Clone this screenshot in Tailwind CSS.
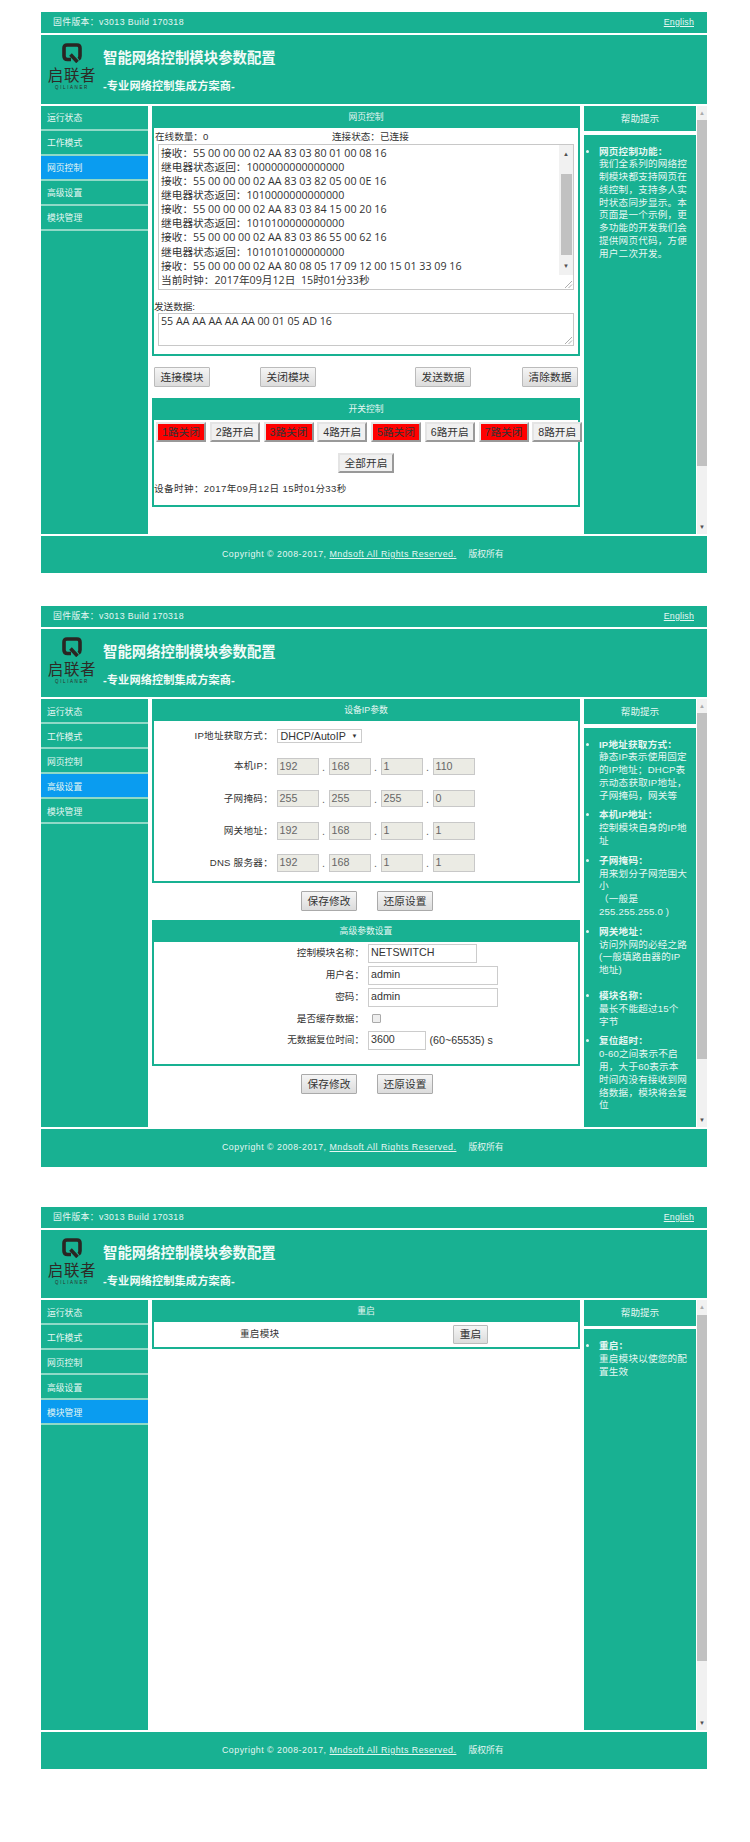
<!DOCTYPE html>
<html lang="zh-CN">
<head>
    <meta charset="UTF-8">
    <title>智能网络控制模块参数配置</title>
    <script src="https://cdn.jsdelivr.net/npm/@tailwindcss/browser@4"></script>
</head>
<body class="bg-white font-['Liberation_Sans','Noto_Sans_CJK_TC',sans-serif] text-[9.6px] text-[#333]">
<div class="w-[750px] h-[1842px] overflow-hidden pl-[41px] pt-[12px]">

    <!-- page 1 : web control -->
    <div class="w-[666px]">
        <div class="h-[21px] bg-[#18b192] text-[#e6f7f2] text-[8.8px] flex items-center justify-between pl-[12px] pr-[13px]">
            <span class="tracking-[0.4px]">固件版本：v3013 Build 170318</span><a class="underline tracking-[0.2px]">English</a>
        </div>
        <div class="mt-[2px] h-[69px] bg-[#18b192] flex">
            <div class="w-[48px] ml-[7px] flex flex-col items-center pt-[8px] text-[#2e2a26]">
                <svg class="w-[20px] h-[20px]" viewBox="0 0 20 20"><path d="M9 16.5H5.5Q2 16.5 2 13V5Q2 2 5 2H15Q18 2 18 5V13Q18 15 16.5 16M8.5 11.5L15.5 19" fill="none" stroke="#2a2522" stroke-width="3.6"/></svg>
                <div class="mt-[4px] text-[15.5px] leading-[17px] tracking-[0.6px] whitespace-nowrap">启联者</div>
                <div class="mt-[1px] text-[4.5px] leading-[6px] tracking-[1.6px] whitespace-nowrap">QILIANER</div>
            </div>
            <div class="ml-[7px] text-[#f2fbf8] font-bold">
                <div class="mt-[13px] text-[14.4px] leading-[20px]">智能网络控制模块参数配置</div>
                <div class="mt-[10px] text-[11.2px] leading-[16px] tracking-[0.1px]">-专业网络控制集成方案商-</div>
            </div>
        </div>
        <div class="mt-[2px] h-[428px] flex">
            <div class="w-[107px] bg-[#18b192] text-[8.8px] text-[#e6f7f2]">
                <div class="h-[25px] pl-[6px] pt-[3px] flex items-center border-b-2 border-[#8fd9c7]">运行状态</div>
                <div class="h-[25px] pl-[6px] pt-[3px] flex items-center border-b-2 border-[#8fd9c7]">工作模式</div>
                <div class="h-[25px] pl-[6px] pt-[3px] flex items-center border-b-2 border-[#8fd9c7] bg-[#0a9cf0]">网页控制</div>
                <div class="h-[25px] pl-[6px] pt-[3px] flex items-center border-b-2 border-[#8fd9c7]">高级设置</div>
                <div class="h-[25px] pl-[6px] pt-[3px] flex items-center border-b-2 border-[#8fd9c7]">模块管理</div>
            </div>
            <div class="w-[428px] ml-[4px]">
                <div class="h-[22px] pt-[2px] bg-[#18b192] text-[8.8px] text-[#e6f7f2] flex items-center justify-center">网页控制</div>
                <div class="h-[228px] border-x-2 border-b-2 border-[#18b192]">
                    <div class="h-[16px] flex items-end text-[9.6px]">
                        <span class="ml-[1px] w-[177px] leading-[14px]">在线数量：0</span><span class="leading-[14px]">连接状态：已连接</span>
                    </div>
                    <div class="relative ml-[4px] w-[416px] h-[146px] border border-[#c8c8c8] flex overflow-hidden">
                        <div class="flex-1 pl-[2px] font-['Open_Sans','Noto_Sans_CJK_TC',sans-serif] text-[10.7px] leading-[14.07px] whitespace-pre -mt-[13px]">当前时钟：2017年09月12日  15时01分32秒
接收：55 00 00 00 02 AA 83 03 80 01 00 08 16
继电器状态返回：1000000000000000
接收：55 00 00 00 02 AA 83 03 82 05 00 0E 16
继电器状态返回：1010000000000000
接收：55 00 00 00 02 AA 83 03 84 15 00 20 16
继电器状态返回：1010100000000000
接收：55 00 00 00 02 AA 83 03 86 55 00 62 16
继电器状态返回：1010101000000000
接收：55 00 00 00 02 AA 80 08 05 17 09 12 00 15 01 33 09 16
当前时钟：2017年09月12日  15时01分33秒</div>
                        <div class="w-[14px] bg-[#f1f1f1] flex flex-col items-center">
                            <div class="h-[14px] mt-[2px] text-[6px] leading-[14px] text-[#505050]">▲</div>
                            <div class="mt-[13px] w-[11px] h-[81px] bg-[#c1c1c1]"></div>
                            <div class="mt-[4px] h-[14px] text-[6px] leading-[14px] text-[#505050]">▼</div>
                        </div>
                        <div class="absolute right-0 bottom-0 w-[14px] h-[14px] bg-white">
                            <svg class="w-[14px] h-[14px]" viewBox="0 0 14 14"><path d="M6 13L13 6M9.5 13L13 9.5" stroke="#999" stroke-width="0.8"/></svg>
                        </div>
                    </div>
                    <div class="mt-[10px] leading-[13px] text-[9.6px]">发送数据:</div>
                    <div class="relative ml-[4px] w-[416px] h-[33px] border border-[#c8c8c8] pl-[2px] font-['Open_Sans','Noto_Sans_CJK_TC',sans-serif] text-[10.7px] leading-[14px] whitespace-pre">55 AA AA AA AA AA 00 01 05 AD 16<svg class="absolute right-0 bottom-0 w-[10px] h-[10px]" viewBox="0 0 10 10"><path d="M2 9L9 2M5.5 9L9 5.5" stroke="#999" stroke-width="0.8"/></svg></div>
                </div>
                <div class="mt-[11px] flex text-[10.7px]">
                    <button class="ml-[2px] w-[56px] h-[20px] border border-[#bbb] rounded-[1px] bg-linear-to-b from-[#f5f5f5] to-[#dcdcdc]">连接模块</button>
                    <button class="ml-[50px] w-[56px] h-[20px] border border-[#bbb] rounded-[1px] bg-linear-to-b from-[#f5f5f5] to-[#dcdcdc]">关闭模块</button>
                    <button class="ml-[99px] w-[56px] h-[20px] border border-[#bbb] rounded-[1px] bg-linear-to-b from-[#f5f5f5] to-[#dcdcdc]">发送数据</button>
                    <button class="ml-[51px] w-[56px] h-[20px] border border-[#bbb] rounded-[1px] bg-linear-to-b from-[#f5f5f5] to-[#dcdcdc]">清除数据</button>
                </div>
                <div class="mt-[11px] h-[22px] pt-[2px] bg-[#18b192] text-[8.8px] text-[#e6f7f2] flex items-center justify-center">开关控制</div>
                <div class="h-[87px] border-x-2 border-b-2 border-[#18b192]">
                    <div class="flex gap-[3.75px] ml-[2px] pt-[2px] w-[440px] text-[10.7px]">
                        <button class="w-[50px] h-[20px] shrink-0 bg-[#ff0000] border-2 border-[#e4e4e4] border-r-[#999] border-b-[#999]">1路关闭</button>
                        <button class="w-[50px] h-[20px] shrink-0 bg-[#f0f0f0] border-2 border-[#e4e4e4] border-r-[#999] border-b-[#999]">2路开启</button>
                        <button class="w-[50px] h-[20px] shrink-0 bg-[#ff0000] border-2 border-[#e4e4e4] border-r-[#999] border-b-[#999]">3路关闭</button>
                        <button class="w-[50px] h-[20px] shrink-0 bg-[#f0f0f0] border-2 border-[#e4e4e4] border-r-[#999] border-b-[#999]">4路开启</button>
                        <button class="w-[50px] h-[20px] shrink-0 bg-[#ff0000] border-2 border-[#e4e4e4] border-r-[#999] border-b-[#999]">5路关闭</button>
                        <button class="w-[50px] h-[20px] shrink-0 bg-[#f0f0f0] border-2 border-[#e4e4e4] border-r-[#999] border-b-[#999]">6路开启</button>
                        <button class="w-[50px] h-[20px] shrink-0 bg-[#ff0000] border-2 border-[#e4e4e4] border-r-[#999] border-b-[#999]">7路关闭</button>
                        <button class="w-[50px] h-[20px] shrink-0 bg-[#f0f0f0] border-2 border-[#e4e4e4] border-r-[#999] border-b-[#999]">8路开启</button>
                    </div>
                    <div class="mt-[11px] flex justify-center">
                        <button class="w-[56px] h-[20px] text-[10.7px] bg-[#f0f0f0] border-2 border-[#e4e4e4] border-r-[#999] border-b-[#999]">全部开启</button>
                    </div>
                    <div class="mt-[9px] leading-[14px] tracking-[0.38px]">设备时钟：2017年09月12日 15时01分33秒</div>
                </div>
            </div>
            <div class="w-[112px] ml-[4px] flex flex-col text-[9.6px] text-[#e6f7f2]">
                <div class="h-[25px] pt-[1px] bg-[#18b192] flex items-center justify-center">帮助提示</div>
                <ul class="mt-[3.5px] flex-1 bg-[#18b192] list-disc pl-[15px] pr-[8px] pt-[11px] leading-[12.8px] tracking-[0.2px]">
                    <li><b>网页控制功能：</b><br>我们全系列的网络控制模块都支持网页在线控制，支持多人实时状态同步显示。本页面是一个示例，更多功能的开发我们会提供网页代码，方便用户二次开发。</li>
                </ul>
            </div>
            <div class="w-[10px] ml-[1px] bg-[#f1f1f1] flex flex-col items-center text-[6px] text-[#505050]">
                <div class="h-[14px] leading-[14px] text-[#aaa]">▲</div>
                <div class="w-[10px] h-[346px] bg-[#c1c1c1]"></div>
                <div class="mt-auto h-[14px] leading-[14px]">▼</div>
            </div>
        </div>
        <div class="mt-[2px] h-[37px] bg-[#18b192] text-[8.8px] text-[#e6f7f2] flex items-center pl-[181px]">
            <span class="tracking-[0.5px]">Copyright © 2008-2017, <a class="underline">Mndsoft All Rights Reserved.</a></span><span class="ml-[12px]">版权所有</span>
        </div>
    </div>

    <!-- page 2 : advanced settings -->
    <div class="w-[666px] mt-[33px]">
        <div class="h-[21px] bg-[#18b192] text-[#e6f7f2] text-[8.8px] flex items-center justify-between pl-[12px] pr-[13px]">
            <span class="tracking-[0.4px]">固件版本：v3013 Build 170318</span><a class="underline tracking-[0.2px]">English</a>
        </div>
        <div class="mt-[2px] h-[68px] bg-[#18b192] flex">
            <div class="w-[48px] ml-[7px] flex flex-col items-center pt-[8px] text-[#2e2a26]">
                <svg class="w-[20px] h-[20px]" viewBox="0 0 20 20"><path d="M9 16.5H5.5Q2 16.5 2 13V5Q2 2 5 2H15Q18 2 18 5V13Q18 15 16.5 16M8.5 11.5L15.5 19" fill="none" stroke="#2a2522" stroke-width="3.6"/></svg>
                <div class="mt-[4px] text-[15.5px] leading-[17px] tracking-[0.6px] whitespace-nowrap">启联者</div>
                <div class="mt-[1px] text-[4.5px] leading-[6px] tracking-[1.6px] whitespace-nowrap">QILIANER</div>
            </div>
            <div class="ml-[7px] text-[#f2fbf8] font-bold">
                <div class="mt-[13px] text-[14.4px] leading-[20px]">智能网络控制模块参数配置</div>
                <div class="mt-[10px] text-[11.2px] leading-[16px] tracking-[0.1px]">-专业网络控制集成方案商-</div>
            </div>
        </div>
        <div class="mt-[2px] h-[428px] flex">
            <div class="w-[107px] bg-[#18b192] text-[8.8px] text-[#e6f7f2]">
                <div class="h-[25px] pl-[6px] pt-[4px] flex items-center border-b-2 border-[#8fd9c7]">运行状态</div>
                <div class="h-[25px] pl-[6px] pt-[4px] flex items-center border-b-2 border-[#8fd9c7]">工作模式</div>
                <div class="h-[25px] pl-[6px] pt-[4px] flex items-center border-b-2 border-[#8fd9c7]">网页控制</div>
                <div class="h-[25px] pl-[6px] pt-[4px] flex items-center border-b-2 border-[#8fd9c7] bg-[#0a9cf0]">高级设置</div>
                <div class="h-[25px] pl-[6px] pt-[4px] flex items-center border-b-2 border-[#8fd9c7]">模块管理</div>
            </div>
            <div class="w-[428px] ml-[4px]">
                <div class="h-[22px] pt-[1px] bg-[#18b192] text-[8.8px] text-[#e6f7f2] flex items-center justify-center">设备IP参数</div>
                <div class="h-[161.5px] border-x-2 border-b-2 border-[#18b192] pt-[8px]">
                    <div class="flex items-center h-[14px]">
                        <span class="w-[119px] text-right tracking-[0.25px]">IP地址获取方式：</span>
                        <div class="ml-[3.5px] w-[85px] h-[14px] border border-[#ccc] flex items-center justify-between px-[3px] text-[10.7px] leading-[12px]"><span>DHCP/AutoIP</span><span class="text-[6px]">▼</span></div>
                    </div>
                    <div class="mt-[14.8px] flex items-center h-[17.5px]">
                        <span class="w-[119px] text-right tracking-[0.25px]">本机IP：</span>
                        <div class="ml-[3.5px] flex text-[10.7px] text-[#666]">
                            <div class="w-[42px] h-[17.5px] pl-[2px] leading-[15px] bg-[#ebebe4] border border-[#c8c8c8]">192</div><span class="w-[10px] text-center leading-[18px]">.</span>
                            <div class="w-[42px] h-[17.5px] pl-[2px] leading-[15px] bg-[#ebebe4] border border-[#c8c8c8]">168</div><span class="w-[10px] text-center leading-[18px]">.</span>
                            <div class="w-[42px] h-[17.5px] pl-[2px] leading-[15px] bg-[#ebebe4] border border-[#c8c8c8]">1</div><span class="w-[10px] text-center leading-[18px]">.</span>
                            <div class="w-[42px] h-[17.5px] pl-[2px] leading-[15px] bg-[#ebebe4] border border-[#c8c8c8]">110</div>
                        </div>
                    </div>
                    <div class="mt-[14.8px] flex items-center h-[17.5px]">
                        <span class="w-[119px] text-right tracking-[0.25px]">子网掩码：</span>
                        <div class="ml-[3.5px] flex text-[10.7px] text-[#666]">
                            <div class="w-[42px] h-[17.5px] pl-[2px] leading-[15px] bg-[#ebebe4] border border-[#c8c8c8]">255</div><span class="w-[10px] text-center leading-[18px]">.</span>
                            <div class="w-[42px] h-[17.5px] pl-[2px] leading-[15px] bg-[#ebebe4] border border-[#c8c8c8]">255</div><span class="w-[10px] text-center leading-[18px]">.</span>
                            <div class="w-[42px] h-[17.5px] pl-[2px] leading-[15px] bg-[#ebebe4] border border-[#c8c8c8]">255</div><span class="w-[10px] text-center leading-[18px]">.</span>
                            <div class="w-[42px] h-[17.5px] pl-[2px] leading-[15px] bg-[#ebebe4] border border-[#c8c8c8]">0</div>
                        </div>
                    </div>
                    <div class="mt-[14.8px] flex items-center h-[17.5px]">
                        <span class="w-[119px] text-right tracking-[0.25px]">网关地址：</span>
                        <div class="ml-[3.5px] flex text-[10.7px] text-[#666]">
                            <div class="w-[42px] h-[17.5px] pl-[2px] leading-[15px] bg-[#ebebe4] border border-[#c8c8c8]">192</div><span class="w-[10px] text-center leading-[18px]">.</span>
                            <div class="w-[42px] h-[17.5px] pl-[2px] leading-[15px] bg-[#ebebe4] border border-[#c8c8c8]">168</div><span class="w-[10px] text-center leading-[18px]">.</span>
                            <div class="w-[42px] h-[17.5px] pl-[2px] leading-[15px] bg-[#ebebe4] border border-[#c8c8c8]">1</div><span class="w-[10px] text-center leading-[18px]">.</span>
                            <div class="w-[42px] h-[17.5px] pl-[2px] leading-[15px] bg-[#ebebe4] border border-[#c8c8c8]">1</div>
                        </div>
                    </div>
                    <div class="mt-[14.8px] flex items-center h-[17.5px]">
                        <span class="w-[119px] text-right tracking-[0.25px]">DNS 服务器：</span>
                        <div class="ml-[3.5px] flex text-[10.7px] text-[#666]">
                            <div class="w-[42px] h-[17.5px] pl-[2px] leading-[15px] bg-[#ebebe4] border border-[#c8c8c8]">192</div><span class="w-[10px] text-center leading-[18px]">.</span>
                            <div class="w-[42px] h-[17.5px] pl-[2px] leading-[15px] bg-[#ebebe4] border border-[#c8c8c8]">168</div><span class="w-[10px] text-center leading-[18px]">.</span>
                            <div class="w-[42px] h-[17.5px] pl-[2px] leading-[15px] bg-[#ebebe4] border border-[#c8c8c8]">1</div><span class="w-[10px] text-center leading-[18px]">.</span>
                            <div class="w-[42px] h-[17.5px] pl-[2px] leading-[15px] bg-[#ebebe4] border border-[#c8c8c8]">1</div>
                        </div>
                    </div>
                </div>
                <div class="mt-[8.5px] flex text-[10.7px]">
                    <button class="ml-[149px] w-[56px] h-[20px] border border-[#aaa] rounded-[1px] bg-linear-to-b from-[#f5f5f5] to-[#dcdcdc]">保存修改</button>
                    <button class="ml-[20px] w-[56px] h-[20px] border border-[#aaa] rounded-[1px] bg-linear-to-b from-[#f5f5f5] to-[#dcdcdc]">还原设置</button>
                </div>
                <div class="mt-[9px] h-[22px] pt-[1px] bg-[#18b192] text-[8.8px] text-[#e6f7f2] flex items-center justify-center">高级参数设置</div>
                <div class="h-[124px] border-x-2 border-b-2 border-[#18b192] pt-[2px]">
                    <div class="flex items-center h-[18.5px]">
                        <span class="w-[210px] text-right">控制模块名称：</span>
                        <div class="ml-[4px] w-[109px] h-[18.5px] pl-[2px] border border-[#ccc] text-[10.7px] leading-[15px]">NETSWITCH</div>
                    </div>
                    <div class="mt-[3.5px] flex items-center h-[18.5px]">
                        <span class="w-[210px] text-right">用户名：</span>
                        <div class="ml-[4px] w-[130px] h-[18.5px] pl-[2px] border border-[#ccc] text-[10.7px] leading-[15px]">admin</div>
                    </div>
                    <div class="mt-[3.5px] flex items-center h-[18.5px]">
                        <span class="w-[210px] text-right">密码：</span>
                        <div class="ml-[4px] w-[130px] h-[18.5px] pl-[2px] border border-[#ccc] text-[10.7px] leading-[15px]">admin</div>
                    </div>
                    <div class="mt-[3px] flex items-center h-[18.5px]">
                        <span class="w-[210px] text-right">是否缓存数据：</span>
                        <div class="ml-[7.5px] w-[9px] h-[9px] border border-[#aaa] rounded-[1px] bg-[#eee]"></div>
                    </div>
                    <div class="mt-[3px] flex items-center h-[18.5px]">
                        <span class="w-[210px] text-right">无数据复位时间：</span>
                        <div class="ml-[4px] w-[58px] h-[18.5px] pl-[2px] border border-[#ccc] text-[10.7px] leading-[15px]">3600</div>
                        <span class="ml-[3.5px] text-[10.7px]">(60~65535) s</span>
                    </div>
                </div>
                <div class="mt-[8px] flex text-[10.7px]">
                    <button class="ml-[149px] w-[56px] h-[20px] border border-[#aaa] rounded-[1px] bg-linear-to-b from-[#f5f5f5] to-[#dcdcdc]">保存修改</button>
                    <button class="ml-[20px] w-[56px] h-[20px] border border-[#aaa] rounded-[1px] bg-linear-to-b from-[#f5f5f5] to-[#dcdcdc]">还原设置</button>
                </div>
            </div>
            <div class="w-[112px] ml-[4px] flex flex-col text-[9.6px] text-[#e6f7f2]">
                <div class="h-[25px] pt-[1px] bg-[#18b192] flex items-center justify-center">帮助提示</div>
                <ul class="mt-[3.5px] flex-1 bg-[#18b192] list-disc pl-[15px] pr-[8px] pt-[11px] leading-[12.8px] tracking-[0.2px]">
                    <li class="mb-[7px]"><b>IP地址获取方式：</b><br>静态IP表示使用固定的IP地址；DHCP表示动态获取IP地址，子网掩码，网关等</li>
                    <li class="mb-[7px]"><b>本机IP地址：</b><br>控制模块自身的IP地址</li>
                    <li class="mb-[7px]"><b>子网掩码：</b><br>用来划分子网范围大小<br>（一般是<br>255.255.255.0 )</li>
                    <li class="mb-[13px]"><b>网关地址：</b><br>访问外网的必经之路(一般填路由器的IP地址)</li>
                    <li class="mb-[7px]"><b>模块名称：</b><br>最长不能超过15个字节</li>
                    <li><b>复位超时：</b><br>0-60之间表示不启用，大于60表示本时间内没有接收到网络数据，模块将会复位</li>
                </ul>
            </div>
            <div class="w-[10px] ml-[1px] bg-[#f1f1f1] flex flex-col items-center text-[6px] text-[#505050]">
                <div class="h-[14px] leading-[14px] text-[#aaa]">▲</div>
                <div class="w-[10px] h-[346px] bg-[#c1c1c1]"></div>
                <div class="mt-auto h-[14px] leading-[14px]">▼</div>
            </div>
        </div>
        <div class="mt-[2px] h-[38px] bg-[#18b192] text-[8.8px] text-[#e6f7f2] flex items-center pl-[181px]">
            <span class="tracking-[0.5px]">Copyright © 2008-2017, <a class="underline">Mndsoft All Rights Reserved.</a></span><span class="ml-[12px]">版权所有</span>
        </div>
    </div>

    <!-- page 3 : module management -->
    <div class="w-[666px] mt-[40px]">
        <div class="h-[21px] bg-[#18b192] text-[#e6f7f2] text-[8.8px] flex items-center justify-between pl-[12px] pr-[13px]">
            <span class="tracking-[0.4px]">固件版本：v3013 Build 170318</span><a class="underline tracking-[0.2px]">English</a>
        </div>
        <div class="mt-[2px] h-[68px] bg-[#18b192] flex">
            <div class="w-[48px] ml-[7px] flex flex-col items-center pt-[8px] text-[#2e2a26]">
                <svg class="w-[20px] h-[20px]" viewBox="0 0 20 20"><path d="M9 16.5H5.5Q2 16.5 2 13V5Q2 2 5 2H15Q18 2 18 5V13Q18 15 16.5 16M8.5 11.5L15.5 19" fill="none" stroke="#2a2522" stroke-width="3.6"/></svg>
                <div class="mt-[4px] text-[15.5px] leading-[17px] tracking-[0.6px] whitespace-nowrap">启联者</div>
                <div class="mt-[1px] text-[4.5px] leading-[6px] tracking-[1.6px] whitespace-nowrap">QILIANER</div>
            </div>
            <div class="ml-[7px] text-[#f2fbf8] font-bold">
                <div class="mt-[13px] text-[14.4px] leading-[20px]">智能网络控制模块参数配置</div>
                <div class="mt-[10px] text-[11.2px] leading-[16px] tracking-[0.1px]">-专业网络控制集成方案商-</div>
            </div>
        </div>
        <div class="mt-[2px] h-[430px] flex">
            <div class="w-[107px] bg-[#18b192] text-[8.8px] text-[#e6f7f2]">
                <div class="h-[25px] pl-[6px] pt-[4px] flex items-center border-b-2 border-[#8fd9c7]">运行状态</div>
                <div class="h-[25px] pl-[6px] pt-[4px] flex items-center border-b-2 border-[#8fd9c7]">工作模式</div>
                <div class="h-[25px] pl-[6px] pt-[4px] flex items-center border-b-2 border-[#8fd9c7]">网页控制</div>
                <div class="h-[25px] pl-[6px] pt-[4px] flex items-center border-b-2 border-[#8fd9c7]">高级设置</div>
                <div class="h-[25px] pl-[6px] pt-[4px] flex items-center border-b-2 border-[#8fd9c7] bg-[#0a9cf0]">模块管理</div>
            </div>
            <div class="w-[428px] ml-[4px]">
                <div class="h-[22px] pt-[2px] bg-[#18b192] text-[8.8px] text-[#e6f7f2] flex items-center justify-center">重启</div>
                <div class="h-[27px] border-x-2 border-b-2 border-[#18b192] flex items-center">
                    <span class="ml-[86px] w-[213px] tracking-[0.25px]">重启模块</span>
                    <button class="w-[35px] h-[19px] border border-[#bbb] rounded-[1px] text-[10.7px] bg-linear-to-b from-[#f5f5f5] to-[#dcdcdc]">重启</button>
                </div>
            </div>
            <div class="w-[112px] ml-[4px] flex flex-col text-[9.6px] text-[#e6f7f2]">
                <div class="h-[26px] pt-[1px] bg-[#18b192] flex items-center justify-center">帮助提示</div>
                <ul class="mt-[3px] flex-1 bg-[#18b192] list-disc pl-[15px] pr-[8px] pt-[11px] leading-[12.8px] tracking-[0.2px]">
                    <li><b>重启：</b><br>重启模块以使您的配置生效</li>
                </ul>
            </div>
            <div class="w-[10px] ml-[1px] bg-[#f1f1f1] flex flex-col items-center text-[6px] text-[#505050]">
                <div class="h-[15px] leading-[15px] text-[#aaa]">▲</div>
                <div class="w-[10px] h-[346px] bg-[#c1c1c1]"></div>
                <div class="mt-auto h-[14px] leading-[14px]">▼</div>
            </div>
        </div>
        <div class="mt-[2px] h-[37px] bg-[#18b192] text-[8.8px] text-[#e6f7f2] flex items-center pl-[181px]">
            <span class="tracking-[0.5px]">Copyright © 2008-2017, <a class="underline">Mndsoft All Rights Reserved.</a></span><span class="ml-[12px]">版权所有</span>
        </div>
    </div>
</div>
</body>
</html>
